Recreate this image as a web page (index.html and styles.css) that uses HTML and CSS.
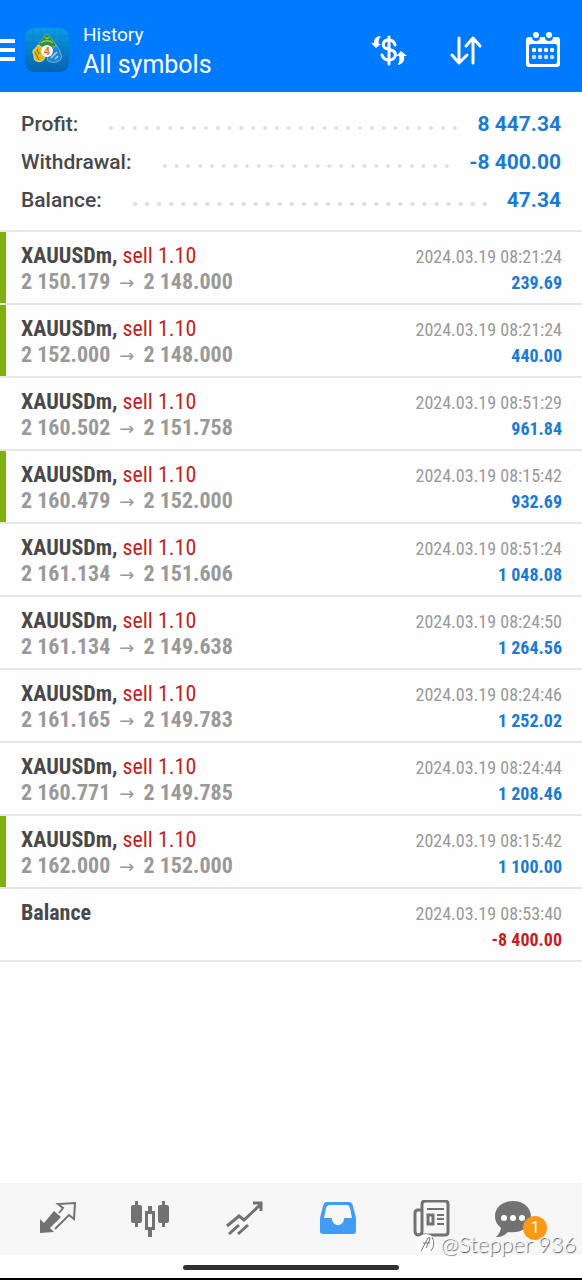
FILE: index.html
```html
<!DOCTYPE html>
<html lang="en">
<head>
    <meta charset="UTF-8">
    <meta name="viewport" content="width=device-width, initial-scale=1.0">
    <title>History</title>
    <link rel="stylesheet" href="styles.css">
</head>
<body>
    <header class="topbar">
        <button class="menu" aria-label="Menu">
            <svg width="15" height="24" viewBox="0 0 15 24"><path d="M0 3h15M0 12h15M0 21h15" stroke="#fff" stroke-width="4"/></svg>
        </button>
        <svg class="logo" width="44" height="44" viewBox="0 0 44 44">
            <defs>
                <linearGradient id="sky" x1="0" y1="0" x2="0" y2="1">
                    <stop offset="0" stop-color="#0b9be6"/>
                    <stop offset="1" stop-color="#0761ae"/>
                </linearGradient>
            </defs>
            <rect width="44" height="44" rx="9" fill="url(#sky)"/>
            <path d="M8 0v44M15 0v44M22 0v44M29 0v44M36 0v44M0 8h44M0 15h44M0 22h44M0 29h44M0 36h44" stroke="#0a76bb" stroke-width="1" opacity=".4"/>
            <path d="M14 18C14 12 18 12 19 8C20 6 24 6 25 9C26 12 30 12 31 18L22 21Z" fill="#2f8f3d" stroke="#7cb87a" stroke-width=".7"/>
            <path d="M16 15c3-3 9-3 12 0M20 9c1 2 3 2 4 0" stroke="#8cc660" stroke-width="1.4" fill="none"/>
            <path d="M13 17c5 2 8 6 7 12-1 5-7 6-10 3-2-2 0-4-2-7-1-4 3-4 5-8z" fill="#dfb922" stroke="#f5ec9b" stroke-width=".8"/>
            <path d="M10 24l4 8M12 21l2 5" stroke="#7c6c12" stroke-width="1"/>
            <path d="M31 17c1 3 4 4 4 7 0 2 3 4 1 7-3 4-9 4-13 2-2-4 1-9 4-11z" fill="#2583cd" stroke="#7fc4ee" stroke-width=".8"/>
            <path d="M26 30l6-6M30 31l3-3" stroke="#8fd0f5" stroke-width="1.6"/>
            <circle cx="22" cy="23" r="6" fill="#fdf6ec"/>
            <text x="22" y="27" class="logo-digit">4</text>
        </svg>
        <div class="title">
            <span class="title-small">History</span>
            <h1>All symbols</h1>
        </div>
        <div class="actions">
            <button aria-label="Symbol">
                <svg width="36" height="36" viewBox="0 0 36 36" fill="none" stroke="#fff">
                    <path d="M24 13c-1-4-3-5-6-5-7 0-8 8-1 9l3 1c7 2 5 10-2 10-4 0-6-2-7-5" stroke-width="3" stroke-linecap="round"/>
                    <path d="M18 5v27" stroke-width="3" stroke-linecap="round"/>
                    <path d="M10 4C5 4 3 7 3 11H0l5 5 5-4H8c-1-3 0-6 2-8z" fill="#fff" stroke="none"/>
                    <path d="M27 33c5-1 7-5 6-9h3l-6-5-5 5h3c1 3 0 6-1 9z" fill="#fff" stroke="none"/>
                </svg>
            </button>
            <button aria-label="Sort">
                <svg width="36" height="36" viewBox="0 0 36 36" fill="none" stroke="#fff" stroke-width="3" stroke-linecap="round" stroke-linejoin="round">
                    <path d="M11 6v24M4 23l7 8 8-8M25 31V7M18 14l7-8 7 8"/>
                </svg>
            </button>
            <button aria-label="Calendar">
                <svg width="36" height="36" viewBox="0 0 36 36">
                    <path fill="#fff" fill-rule="evenodd" d="M4 5h3a4 4 0 0 0 8 0h5a4 4 0 0 0 8 0h4a3 3 0 0 1 3 3v24a3 3 0 0 1-3 3H4a3 3 0 0 1-3-3V8a3 3 0 0 1 3-3zM6 12a2 2 0 0 0-2 2v16a2 2 0 0 0 2 2h24a2 2 0 0 0 2-2V14a2 2 0 0 0-2-2z"/>
                    <circle cx="11" cy="3" r="3" fill="#fff"/><circle cx="24" cy="3" r="3" fill="#fff"/>
                    <g fill="#fff">
                        <circle cx="9" cy="18" r="2.2"/><circle cx="15" cy="18" r="2.2"/><circle cx="21" cy="18" r="2.2"/><circle cx="27" cy="18" r="2.2"/>
                    </g>
                    <g fill="#c4e2ff">
                        <circle cx="9" cy="25" r="2.2"/><circle cx="15" cy="25" r="2.2"/><circle cx="21" cy="25" r="2.2"/><circle cx="27" cy="25" r="2.2"/>
                    </g>
                </svg>
            </button>
        </div>
    </header>

    <main>
        <dl class="summary">
            <div class="sum-row"><dt>Profit:</dt><dd class="dots"></dd><dd>8 447.34</dd></div>
            <div class="sum-row"><dt>Withdrawal:</dt><dd class="dots"></dd><dd>-8 400.00</dd></div>
            <div class="sum-row"><dt>Balance:</dt><dd class="dots"></dd><dd>47.34</dd></div>
        </dl>

        <ul class="deals">
            <li class="deal tp">
                <div><p class="symbol">XAUUSDm, <span>sell 1.10</span></p><p class="price">2 150.179 <i>→</i> 2 148.000</p></div>
                <div class="right"><time>2024.03.19 08:21:24</time><p class="profit">239.69</p></div>
            </li>
            <li class="deal tp">
                <div><p class="symbol">XAUUSDm, <span>sell 1.10</span></p><p class="price">2 152.000 <i>→</i> 2 148.000</p></div>
                <div class="right"><time>2024.03.19 08:21:24</time><p class="profit">440.00</p></div>
            </li>
            <li class="deal">
                <div><p class="symbol">XAUUSDm, <span>sell 1.10</span></p><p class="price">2 160.502 <i>→</i> 2 151.758</p></div>
                <div class="right"><time>2024.03.19 08:51:29</time><p class="profit">961.84</p></div>
            </li>
            <li class="deal tp">
                <div><p class="symbol">XAUUSDm, <span>sell 1.10</span></p><p class="price">2 160.479 <i>→</i> 2 152.000</p></div>
                <div class="right"><time>2024.03.19 08:15:42</time><p class="profit">932.69</p></div>
            </li>
            <li class="deal">
                <div><p class="symbol">XAUUSDm, <span>sell 1.10</span></p><p class="price">2 161.134 <i>→</i> 2 151.606</p></div>
                <div class="right"><time>2024.03.19 08:51:24</time><p class="profit">1 048.08</p></div>
            </li>
            <li class="deal">
                <div><p class="symbol">XAUUSDm, <span>sell 1.10</span></p><p class="price">2 161.134 <i>→</i> 2 149.638</p></div>
                <div class="right"><time>2024.03.19 08:24:50</time><p class="profit">1 264.56</p></div>
            </li>
            <li class="deal">
                <div><p class="symbol">XAUUSDm, <span>sell 1.10</span></p><p class="price">2 161.165 <i>→</i> 2 149.783</p></div>
                <div class="right"><time>2024.03.19 08:24:46</time><p class="profit">1 252.02</p></div>
            </li>
            <li class="deal">
                <div><p class="symbol">XAUUSDm, <span>sell 1.10</span></p><p class="price">2 160.771 <i>→</i> 2 149.785</p></div>
                <div class="right"><time>2024.03.19 08:24:44</time><p class="profit">1 208.46</p></div>
            </li>
            <li class="deal tp">
                <div><p class="symbol">XAUUSDm, <span>sell 1.10</span></p><p class="price">2 162.000 <i>→</i> 2 152.000</p></div>
                <div class="right"><time>2024.03.19 08:15:42</time><p class="profit">1 100.00</p></div>
            </li>
            <li class="deal">
                <div><p class="symbol">Balance</p></div>
                <div class="right"><time>2024.03.19 08:53:40</time><p class="profit loss">-8 400.00</p></div>
            </li>
        </ul>
    </main>

    <footer class="bottom">
        <nav class="tabs">
            <button aria-label="Quotes">
                <svg width="38" height="38" viewBox="0 0 38 38">
                    <path fill="#727272" d="M2 19l4 4L16 11l7 6-11 11 4 4-14 1z"/>
                    <path fill="none" stroke="#727272" stroke-width="2" d="M21 13l4-5-5-4 17-1-1 16-5-4-14 14"/>
                </svg>
            </button>
            <button aria-label="Chart">
                <svg width="38" height="38" viewBox="0 0 38 38" fill="#727272">
                    <path d="M4 1h3v26H4zM31 1h3v26h-3zM17 6h4v7h-4zM17 29h4v8h-4z"/>
                    <rect x="0" y="5" width="11" height="18" rx="2"/><rect x="27" y="5" width="11" height="18" rx="2"/>
                    <path fill-rule="evenodd" d="M14 11h10v19H14zM17 14v13h4V14z"/>
                </svg>
            </button>
            <button aria-label="Trade">
                <svg width="38" height="38" viewBox="0 0 38 38" fill="none" stroke="#727272" stroke-width="3">
                    <path d="M2 26l12-10 5 4L36 4M28 3h8v8"/>
                    <path d="M4 34l10-9M13 34l10-9"/>
                </svg>
            </button>
            <button aria-label="History">
                <svg width="38" height="38" viewBox="0 0 38 38">
                    <path fill="#429cf5" fill-rule="evenodd" d="M8 2h22q3 0 4 4l3 12v13q0 3-3 3H4q-3 0-3-3V18L4 6q1-4 4-4zM10 5q-2 0-3 3L5 18h7q1 0 1 1c1 8 11 8 12 0q0-1 1-1h7L31 8q-1-3-3-3z"/>
                </svg>
            </button>
            <button aria-label="News">
                <svg width="38" height="38" viewBox="0 0 38 38" fill="none" stroke="#727272" stroke-width="3">
                    <path d="M9 10H6q-3 0-3 3v18q0 4 4 4h26q3 0 3-3V4q0-3-3-3H13q-3 0-3 3v27q0 4-4 4"/>
                    <path d="M15 9h17M25 15h7M25 19h7M25 24h7" stroke-width="2"/>
                    <rect x="16" y="15" width="5" height="9"/>
                </svg>
            </button>
            <button class="chat" aria-label="Messages">
                <svg width="38" height="38" viewBox="0 0 38 38">
                    <path fill="#727272" d="M19 1C9 1 1 7 1 16c0 6 3 9 6 12-1 4-2 6-5 9 6 0 9-2 12-5 13 2 23-5 23-15C37 7 29 1 19 1z"/>
                    <g fill="#fff"><circle cx="10" cy="18" r="3"/><circle cx="19" cy="18" r="3"/><circle cx="28" cy="18" r="3"/></g>
                </svg>
                <span class="badge">1</span>
            </button>
        </nav>
        <div class="home"></div>
        <div class="watermark">
            <svg width="20" height="20" viewBox="0 0 20 20"><circle cx="10" cy="10" r="10" fill="#fff"/><path d="M5 17l7-13q2-2 2 1l-4 9M7 9h7M16 3q4 7-1 14" fill="none" stroke="#777" stroke-width="1"/></svg>
            <span>@Stepper 936</span>
        </div>
    </footer>
</body>
</html>
```
FILE: styles.css
```css
* {
    box-sizing: border-box;
}
body {
    margin: 0;
    min-height: 100vh;
    display: flex;
    flex-direction: column;
    background-color: #fefefe;
    color: #48484c;
    font-family: Roboto, "Liberation Sans", sans-serif;
}
p, h1, ul, dl, dd {
    margin: 0;
    padding: 0;
}
button {
    padding: 0;
    border: none;
    background: none;
    cursor: pointer;
}
svg {
    display: block;
}

.topbar {
    display: flex;
    align-items: center;
    height: 92px;
    padding: 8px 21px 0 0;
    background-color: #007aff;
    color: white;
}
.logo {
    margin: 0 14px 0 10px;
}
.logo-digit {
    font: bold 11px Roboto, sans-serif;
    fill: #ee7a24;
    text-anchor: middle;
}
.title {
    padding-top: 2px;
}
.title-small {
    display: block;
    font-size: 19px;
    line-height: 28px;
}
.title h1 {
    font-size: 25px;
    line-height: 32px;
    font-weight: normal;
}
.actions {
    display: flex;
    gap: 41px;
    margin-left: auto;
}

.summary {
    padding: 13px 21px 11px;
    border-bottom: 2px solid #e6e6e6;
}
.sum-row {
    display: flex;
    align-items: center;
    height: 38px;
    font-size: 21px;
    font-weight: 500;
}
.sum-row dd {
    color: #1a7ad4;
    font-weight: bold;
}
.sum-row .dots {
    flex: 1;
    height: 4px;
    margin: 8px 16px 0 27px;
    background: radial-gradient(circle, #e0e0e0 2px, transparent 2px) 0 0 / 12px 4px round;
}

.deals {
    list-style: none;
    font-family: "Roboto Condensed", "Liberation Sans Narrow", Roboto, sans-serif;
}
.deal {
    display: flex;
    justify-content: space-between;
    height: 73px;
    padding: 11px 20px 0 21px;
    border-bottom: 2px solid #e6e6e6;
}
.deal.tp {
    box-shadow: inset 6px 0 #7fb00c;
}
.symbol, .price {
    font-size: 22px;
    line-height: 26px;
    font-weight: bold;
}
.symbol span {
    color: #c41e25;
    font-weight: normal;
}
.price {
    color: #999;
}
.price i {
    margin: 0 4px;
    font: 18px/20px "DejaVu Sans", sans-serif;
}
.right {
    padding-top: 1px;
    text-align: right;
    font-size: 18px;
    line-height: 26px;
}
.right time {
    display: block;
    color: #999;
}
.profit {
    color: #1a7ad4;
    font-weight: bold;
}
.loss {
    color: #c41e25;
}

.bottom {
    position: relative;
    margin-top: auto;
    border-bottom: 2px solid black;
}
.tabs {
    display: grid;
    grid-template-columns: repeat(6, 1fr);
    height: 72px;
    padding: 0 10px;
    background-color: #f6f6f6;
}
.tabs button {
    display: flex;
    align-items: center;
    justify-content: center;
}
.chat {
    position: relative;
}
.tabs .chat {
    padding-right: 24px;
}
.badge {
    position: absolute;
    left: 48%;
    top: 33px;
    display: flex;
    align-items: center;
    justify-content: center;
    width: 24px;
    height: 24px;
    border-radius: 50%;
    background-color: #fb9a12;
    color: white;
    font: 16px/16px Roboto, sans-serif;
}
.home {
    width: 37%;
    height: 5px;
    margin: 10px auto 8px;
    border-radius: 3px;
    background-color: #303030;
}
.watermark {
    position: absolute;
    right: 6px;
    top: 50px;
    display: flex;
    align-items: center;
    gap: 4px;
    color: white;
    font: 300 22px/22px Lato, sans-serif;
    text-shadow: 1px 1px 1px #444;
}
```
